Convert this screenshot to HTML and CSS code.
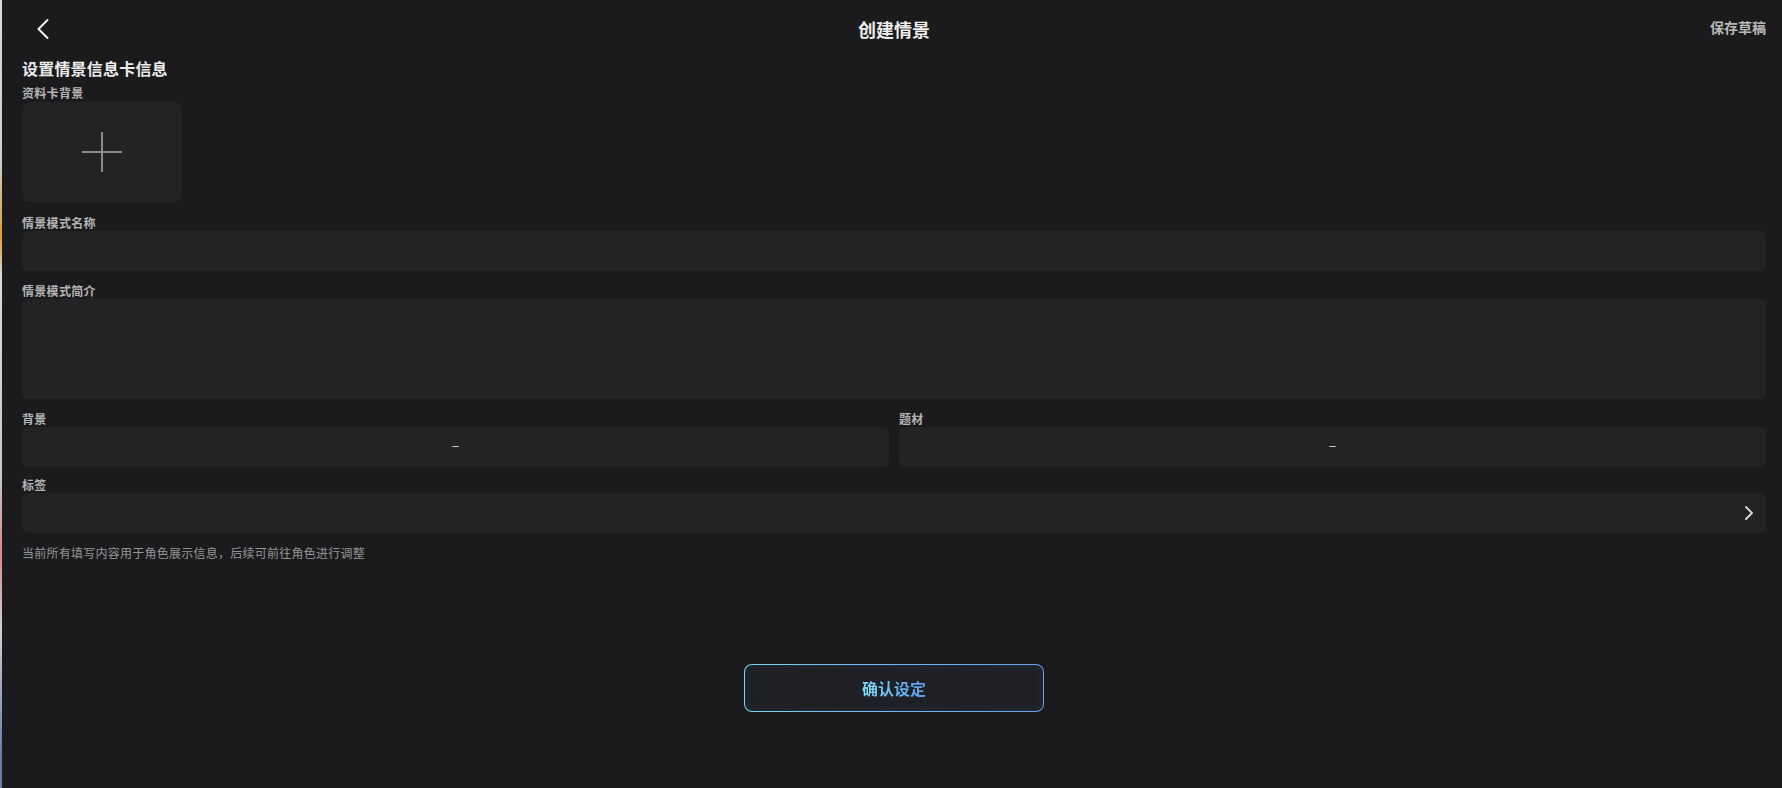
FILE: index.html
```html
<!DOCTYPE html>
<html lang="zh-CN">
<head>
<meta charset="utf-8">
<title>创建情景</title>
<link rel="stylesheet" href="styles.css">
</head>
<body>
<div class="strip"></div>
<div class="app">
  <header class="header">
    <button class="back" aria-label="返回">
      <svg width="14" height="22" viewBox="0 0 14 22"><path d="M11.5 2 L2.5 11 L11.5 20" fill="none" stroke="#f2f2f2" stroke-width="2" stroke-linecap="round" stroke-linejoin="round"/></svg>
    </button>
    <h1 class="title">创建情景</h1>
    <span class="save">保存草稿</span>
  </header>

  <h2 class="section-title">设置情景信息卡信息</h2>

  <div class="group first">
    <div class="label">资料卡背景</div>
    <div class="upload">
      <svg width="40" height="40" viewBox="0 0 40 40"><path d="M20 0 V40 M0 20 H40" stroke="#8a8a8c" stroke-width="2"/></svg>
    </div>
  </div>

  <div class="group name">
    <div class="label">情景模式名称</div>
    <div class="field"></div>
  </div>

  <div class="group intro">
    <div class="label">情景模式简介</div>
    <div class="field area"></div>
  </div>

  <div class="row">
    <div class="group">
      <div class="label">背景</div>
      <div class="field select">–</div>
    </div>
    <div class="group">
      <div class="label">题材</div>
      <div class="field select">–</div>
    </div>
  </div>

  <div class="group tag-group">
    <div class="label">标签</div>
    <div class="field tags">
      <svg width="10" height="16" viewBox="0 0 10 16"><path d="M2 2 L8 8 L2 14" fill="none" stroke="#d0d0d0" stroke-width="2" stroke-linecap="round" stroke-linejoin="round"/></svg>
    </div>
  </div>

  <p class="hint">当前所有填写内容用于角色展示信息，后续可前往角色进行调整</p>

  <div class="actions">
    <button class="confirm"><span>确认设定</span></button>
  </div>
</div>
</body>
</html>
```

FILE: styles.css
```css
* { box-sizing: border-box; }
html, body {
  margin: 0;
  height: 100%;
  background: #1b1b1d;
}
body {
  display: flex;
  font-family: "Noto Sans CJK SC", "Noto Sans", sans-serif;
  color: #e8e8e8;
  overflow: hidden;
}
.strip {
  width: 2px;
  flex: none;
  background: linear-gradient(#d8d8d8 0%, #cfcfcf 20%, #e0a030 30%, #d8d8d8 35%, #c9c9c9 60%, #d88 70%, #d0d0d0 80%, #6a80b0 95%);
}
.app {
  flex: 1;
  padding: 0 16px 0 20px;
  display: flex;
  flex-direction: column;
}
.header {
  height: 58px;
  display: grid;
  grid-template-columns: 1fr auto 1fr;
  align-items: center;
}
.back {
  justify-self: start;
  background: none;
  border: 0;
  padding: 0;
  margin-left: 14px;
  margin-top: -1px;
  display: flex;
  cursor: pointer;
}
.title {
  margin: 0;
  font-size: 18px;
  font-weight: 700;
  color: #ececec;
  line-height: 24px;
}
.save {
  justify-self: end;
  font-size: 14px;
  font-weight: 700;
  color: #b8b8b8;
  margin-top: -4px;
}
.section-title {
  margin: 0;
  font-size: 16px;
  line-height: 20px;
  font-weight: 700;
  color: #ececec;
  letter-spacing: 0.2px;
}
.group {
  margin-top: 10px;
  display: flex;
  flex-direction: column;
}
.group.first { margin-top: 6px; }
.group.name { margin-top: 12px; }
.group.intro { margin-top: 11px; }
.row .group { margin-top: 11px; }
.group.tag-group { margin-top: 9px; }
.label {
  font-size: 12px;
  line-height: 17px;
  font-weight: 700;
  color: #b4b4b4;
  letter-spacing: 0.3px;
}
.group.first .label { margin-bottom: 1px; }
.upload {
  width: 160px;
  height: 100px;
  background: #232326;
  border-radius: 6px;
  display: flex;
  align-items: center;
  justify-content: center;
}
.field {
  height: 40px;
  background: #232326;
  border-radius: 6px;
}
.field.area { height: 100px; }
.row {
  display: grid;
  grid-template-columns: 1fr 1fr;
  column-gap: 10px;
}
.select {
  display: flex;
  align-items: center;
  justify-content: center;
  font-size: 14px;
  line-height: 14px;
  color: #dcdcdc;
  padding-bottom: 6px;
}
.tags {
  display: flex;
  align-items: center;
  justify-content: flex-end;
  padding-right: 12px;
}
.hint {
  margin: 11px 0 0;
  font-size: 12px;
  line-height: 17px;
  color: #959595;
  letter-spacing: 0.25px;
}
.actions {
  display: flex;
  justify-content: center;
  margin-top: 103px;
}
.confirm {
  width: 300px;
  height: 48px;
  border-radius: 8px;
  border: 1px solid transparent;
  background:
    linear-gradient(#1e2025, #1e2025) padding-box,
    linear-gradient(90deg, #74d6f2, #6a9cf0) border-box;
  box-shadow: inset 0 0 10px rgba(60, 70, 85, 0.35);
  display: flex;
  align-items: center;
  justify-content: center;
  cursor: pointer;
  font-family: inherit;
}
.confirm span {
  font-size: 16px;
  font-weight: 700;
  background: linear-gradient(90deg, #7adcf4, #5b98ee);
  -webkit-background-clip: text;
  background-clip: text;
  color: transparent;
}
```
